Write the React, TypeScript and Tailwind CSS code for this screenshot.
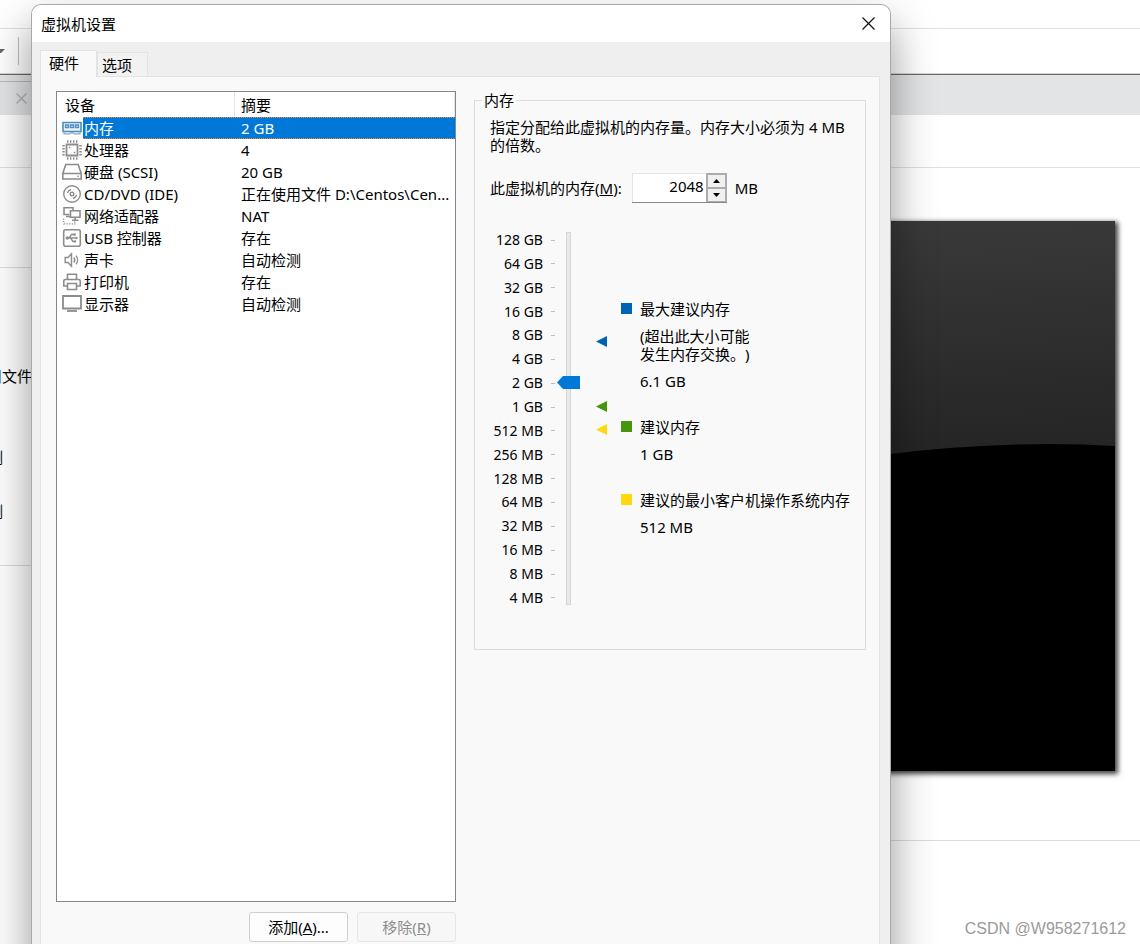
import { useState } from "react";
import type { ReactNode } from "react";

type Device = {
  name: string;
  summary: string;
  icon: ReactNode;
};

const iconProps = {
  width: 20,
  height: 20,
  viewBox: "0 0 20 20",
  fill: "none",
  stroke: "#8c8c8c",
  strokeWidth: 1.6,
};

const devices: Device[] = [
  {
    name: "内存",
    summary: "2 GB",
    icon: (
      <svg {...iconProps} stroke="#4a8dbd">
        <path d="M1 4.500h18v9H1z" fill="#eaf3fa" />
        <path d="M3.500 7h3v2.500h-3zM8.500 7h3v2.500h-3zM13.500 7h3v2.500h-3z" strokeWidth="1.3" />
        <path d="M2 13.500v2.300h6l2-1.500 2 1.500h6v-2.300" stroke="#8aa9bf" strokeWidth="1.2" />
      </svg>
    ),
  },
  {
    name: "处理器",
    summary: "4",
    icon: (
      <svg {...iconProps}>
        <path d="M4.500 4.500h11v11h-11z" strokeWidth="1.800" />
        <path d="M5 1.500h10.500M5 18.500h10.500" strokeWidth="2.400" strokeDasharray="1.400 1.600" />
        <path d="M1.500 5v10.500M18.500 5v10.500" strokeWidth="2.400" strokeDasharray="1.400 1.600" />
        <path d="M6.800 7.500h1.500M11.800 12.500h1.500" />
      </svg>
    ),
  },
  {
    name: "硬盘 (SCSI)",
    summary: "20 GB",
    icon: (
      <svg {...iconProps}>
        <path d="M3.800 2.500h12.400l3 9v5.500H.8v-5.500zM.8 11.500h18.400" />
        <path d="M15 14.200h2" strokeWidth="1" />
      </svg>
    ),
  },
  {
    name: "CD/DVD (IDE)",
    summary: "正在使用文件 D:\\Centos\\Cen...",
    icon: (
      <svg {...iconProps} strokeWidth="1.4">
        <circle cx="10" cy="10" r="8.300" />
        <circle cx="10" cy="10" r="1.800" />
        <path d="M5.500 9A5 5 0 0 1 9 5.500M14.500 11A5 5 0 0 1 11 14.500" />
      </svg>
    ),
  },
  {
    name: "网络适配器",
    summary: "NAT",
    icon: (
      <svg {...iconProps}>
        <path d="M7.500 8.500H2V1.800h9V4M4 10.500h4" />
        <path d="M8.500 4.800h9.500v6.400H8.500zM13.200 11v3M10 14.300h6.500" />
        <path d="M1.700 12.500v6M2 17.800h11.500M12.700 15.500v3" strokeWidth="1.200" strokeDasharray="1.200 1.400" />
      </svg>
    ),
  },
  {
    name: "USB 控制器",
    summary: "存在",
    icon: (
      <svg {...iconProps} strokeWidth="1.3">
        <rect x="1.700" y="1.700" width="16.600" height="16.600" rx="2" strokeWidth="1.600" />
        <path d="M5 10h10M7 10l2.500-3.500H12M8.500 10l2.500 3.500h2" />
        <circle cx="5.300" cy="10" r="1.100" fill="#8c8c8c" />
        <path d="M11.500 5.500h2v2h-2zM12.300 12.500h1.700v1.700h-1.700zM14 8.800l2 1.200-2 1.200z" fill="#8c8c8c" strokeWidth=".3" />
      </svg>
    ),
  },
  {
    name: "声卡",
    summary: "自动检测",
    icon: (
      <svg {...iconProps} strokeWidth="1.4">
        <path d="M3.200 7.500H6l3.500-3.700v12.400L6 12.500H3.200z" />
        <path d="M11.800 7.500a4 4 0 0 1 0 5M14 5.800a6.500 6.500 0 0 1 0 8.400" />
      </svg>
    ),
  },
  {
    name: "打印机",
    summary: "存在",
    icon: (
      <svg {...iconProps}>
        <path d="M5.500 7.500V2.200h9v5.300" />
        <path d="M5 14H1.800V9q0-1.500 1.500-1.500h13.400q1.500 0 1.500 1.500v5H15" />
        <path d="M5.500 11.500h9v6h-9z" />
      </svg>
    ),
  },
  {
    name: "显示器",
    summary: "自动检测",
    icon: (
      <svg {...iconProps}>
        <path d="M1 2h18v12.500H1z" strokeWidth="1.800" />
        <path d="M5 17h10" strokeWidth="1.800" />
      </svg>
    ),
  },
];

const sizes = [
  "128 GB",
  "64 GB",
  "32 GB",
  "16 GB",
  "8 GB",
  "4 GB",
  "2 GB",
  "1 GB",
  "512 MB",
  "256 MB",
  "128 MB",
  "64 MB",
  "32 MB",
  "16 MB",
  "8 MB",
  "4 MB",
];

// blue row with a dotted focus line along its top and bottom
const selectedCell =
  "text-white [background:repeating-linear-gradient(90deg,#ff8728_0_1px,#0078d7_1px_2px)_top/100%_1px_no-repeat,repeating-linear-gradient(90deg,#ff8728_0_1px,#0078d7_1px_2px)_bottom/100%_1px_no-repeat,#0078d7]";

function Backdrop() {
  return (
    <div className="flex h-full flex-col bg-white">
      <div className="h-[29px] shrink-0 border-b border-[#e0e0e0]" />
      <div className="flex h-[45px] shrink-0 items-center border-b border-[#d5d5d5]">
        <svg width="6" height="4" className="shrink-0">
          <path d="M0 0h5L1 4H0z" fill="#666" />
        </svg>
        <div className="ml-3 h-7 w-px bg-[#c0c0c0]" />
      </div>
      <div className="h-[41px] shrink-0 border-t border-[#6a6a6a] bg-[#e3e4e6]">
        <div className="mt-[6px] flex h-[34px] w-[200px] items-center border-t border-[#b9babc] pl-4">
          <svg width="11" height="11" stroke="#b4b5b7" strokeWidth="1.5">
            <path d="M.5.5l10 10M10.500.5l-10 10" />
          </svg>
        </div>
      </div>
      <div className="h-[53px] shrink-0 border-b border-[#e0e0e0]" />
      <div className="flex flex-1">
        <aside className="w-8 shrink-0">
          <div className="h-[100px] border-b border-[#dcdcdc]" />
          <div className="h-[298px] border-b border-[#dcdcdc] pt-[99px]">
            <p className="flex justify-end whitespace-nowrap">用文件</p>
            <p className="mt-[63px] flex w-[3px] justify-end whitespace-nowrap">测</p>
            <p className="mt-9 flex w-[3px] justify-end whitespace-nowrap">测</p>
          </div>
        </aside>
        <main className="flex flex-1 flex-col pt-[53px]">
          <svg
            width="733"
            height="550"
            viewBox="0 0 733 550"
            className="mr-[25px] shrink-0 self-end shadow-[2px_2px_5px_1px_rgba(0,0,0,0.75)]"
          >
            <defs>
              <linearGradient id="sheen" x1="0" y1="0" x2="0.1" y2="1">
                <stop offset="0" stopColor="#3b3b3b" />
                <stop offset="1" stopColor="#1f1f1f" />
              </linearGradient>
            </defs>
            <path d="M0 0h733v550H0z" fill="#000" />
            <path d="M0 0h733v225Q700 223 668 223Q588 223 508 233Q250 256 0 320z" fill="url(#sheen)" />
          </svg>
          <div className="mt-[69px] border-t border-[#dcdcdc]" />
          <p className="mt-auto mr-[14px] mb-[3px] text-right font-['Liberation_Sans'] text-base text-[#9a9a9a]">
            CSDN @W958271612
          </p>
        </main>
      </div>
    </div>
  );
}

function DeviceList() {
  const [selected, setSelected] = useState(0);

  return (
    <div className="flex-1 overflow-hidden border border-[#828790] bg-white">
      <table className="w-full table-fixed border-separate border-spacing-0 whitespace-nowrap">
        <colgroup>
          <col className="w-[26px]" />
          <col className="w-[152px]" />
          <col />
        </colgroup>
        <thead>
          <tr className="h-[25px] text-left">
            <th colSpan={2} className="border-r border-[#e5e5e5] p-0 pl-2 font-normal">
              设备
            </th>
            <th className="border-r border-[#e5e5e5] p-0 pl-[6px] font-normal">摘要</th>
          </tr>
        </thead>
        <tbody>
          {devices.map((device, i) => (
            <tr key={device.name} className="h-[22px]" onClick={() => setSelected(i)}>
              <td className="p-0 pl-[5px]">{device.icon}</td>
              <td className={`p-0 pl-px ${i === selected ? selectedCell : ""}`}>
                {device.name}
              </td>
              <td className={`p-0 pl-[6px] ${i === selected ? selectedCell : ""}`}>
                {device.summary}
              </td>
            </tr>
          ))}
        </tbody>
      </table>
    </div>
  );
}

function LegendItem({
  swatch,
  title,
  note,
  value,
}: {
  swatch: string;
  title: string;
  note?: ReactNode;
  value: string;
}) {
  return (
    <div className="grid grid-cols-[11px_1fr] gap-x-2 gap-y-[9px] whitespace-nowrap">
      <span className={`mt-[3px] size-[11px] ${swatch}`} />
      <p>{title}</p>
      {note && <p className="col-start-2">{note}</p>}
      <p className="col-start-2">{value}</p>
    </div>
  );
}

function MemoryPanel() {
  const [memory, setMemory] = useState("2048");
  const level = Math.log2(Number(memory) || 4) - 2;

  return (
    <fieldset className="min-w-0 flex-1 self-start border border-[#dcdcdc] px-[15px] pb-[41px]">
      <legend className="-ml-2 px-[2px]">内存</legend>
      <p className="pt-[9px]">
        指定分配给此虚拟机的内存量。内存大小必须为 4 MB 的倍数。
      </p>

      <div className="mt-[19px] flex items-center whitespace-nowrap">
        <label htmlFor="memory">
          此虚拟机的内存(<u>M</u>):
        </label>
        <div className="ml-[10px] flex h-[30px] border-b border-[#868686] bg-white">
          <input
            id="memory"
            value={memory}
            onChange={(e) => setMemory(e.target.value)}
            className="w-[74px] border-t border-l border-[#e5e5e5] pr-[2px] pb-1 text-right outline-none"
          />
          <div className="flex w-[21px] flex-col border border-b-0 border-[#acacac] bg-[#f0f0f0]">
            <button
              aria-label="增加"
              onClick={() => setMemory(String(Number(memory) * 2))}
              className="flex flex-1 items-center justify-center border border-[#acacac]"
            >
              <svg width="7" height="4">
                <path d="M3.500 0L7 4H0z" />
              </svg>
            </button>
            <button
              aria-label="减少"
              onClick={() => setMemory(String(Number(memory) / 2))}
              className="flex flex-1 items-center justify-center border border-[#acacac]"
            >
              <svg width="7" height="4">
                <path d="M0 0h7L3.500 4z" />
              </svg>
            </button>
          </div>
        </div>
        <span className="ml-2">MB</span>
      </div>

      <div className="mt-[27px] flex">
        <ul className="flex h-[378px] w-[65px] flex-col justify-between text-sm leading-5">
          {sizes.map((size) => (
            <li key={size} className="flex items-center justify-end gap-2 whitespace-nowrap">
              {size}
              <span className="h-px w-1 bg-[#bdbdbd]" />
            </li>
          ))}
        </ul>

        <div className="mt-[2px] ml-[2px] grid h-[373px] w-[23px] justify-items-center">
          <div className="w-[5px] border border-[#d6d6d6] bg-[#e7eaea] [grid-area:1/1]" />
          <input
            type="range"
            aria-label="内存"
            min={0}
            max={15}
            step={1}
            value={level}
            onChange={(e) => setMemory(String(2 ** (Number(e.target.value) + 2)))}
            className="h-[373px] w-[23px] appearance-none bg-transparent [direction:rtl] [grid-area:1/1] [writing-mode:vertical-lr] [&::-webkit-slider-thumb]:h-[13px] [&::-webkit-slider-thumb]:w-[23px] [&::-webkit-slider-thumb]:appearance-none [&::-webkit-slider-thumb]:bg-[#0078d7] [&::-webkit-slider-thumb]:[clip-path:polygon(0_50%,6px_0,100%_0,100%_100%,6px_100%)]"
          />
        </div>

        <svg width="12" height="378" className="ml-4 shrink-0">
          <path d="M0 111.500l11-5.500v11z" fill="#0063b1" />
          <path d="M0 176.500l11-5.500v11z" fill="#44960c" />
          <path d="M0 199.500l11-5.500v11z" fill="#ffd90f" />
        </svg>

        <div className="mt-[70px] ml-[13px] flex flex-col gap-7">
          <LegendItem
            swatch="bg-[#0063b1]"
            title="最大建议内存"
            note={
              <>
                (超出此大小可能
                <br />
                发生内存交换。)
              </>
            }
            value="6.1 GB"
          />
          <LegendItem swatch="bg-[#44960c]" title="建议内存" value="1 GB" />
          <LegendItem
            swatch="bg-[#ffd90f]"
            title="建议的最小客户机操作系统内存"
            value="512 MB"
          />
        </div>
      </div>
    </fieldset>
  );
}

function SettingsDialog() {
  return (
    <section
      role="dialog"
      aria-labelledby="title"
      className="absolute top-[5px] right-[250px] -bottom-6 left-8 flex flex-col overflow-hidden rounded-t-[9px] bg-[#efefef] shadow-[0_0_0_1px_#a9a9a9,0_22px_44px_2px_rgba(0,0,0,0.4)]"
    >
      <header className="flex h-[37px] shrink-0 items-center justify-between bg-white pr-[15px] pl-[9px]">
        <h1 id="title">虚拟机设置</h1>
        <button aria-label="关闭">
          <svg width="13" height="13" stroke="#111" strokeWidth="1.2">
            <path d="M.5.5l12 12M12.500.5l-12 12" />
          </svg>
        </button>
      </header>

      <div className="flex flex-1 flex-col pt-2 pr-[10px] pl-2">
        <nav role="tablist" className="flex items-end">
          <button
            role="tab"
            aria-selected="true"
            className="relative -mb-px flex h-[27px] w-[57px] justify-start border border-b-0 border-[#e3e3e3] bg-[#f9f9f9] pt-[3px] pl-2"
          >
            硬件
          </button>
          <button
            role="tab"
            aria-selected="false"
            className="flex h-6 w-[51px] items-center justify-start border border-b-0 border-[#e3e3e3] bg-[#f2f2f2] pl-1"
          >
            选项
          </button>
        </nav>

        <div className="flex flex-1 gap-[18px] border border-b-0 border-[#e3e3e3] bg-[#f9f9f9] pt-[14px] pr-[13px] pb-[26px] pl-[15px]">
          <div className="flex w-[400px] shrink-0 flex-col">
            <DeviceList />
            <div className="mt-[10px] flex justify-end gap-[9px]">
              <button className="h-[30px] w-[99px] rounded-[3px] border border-[#cfcfcf] bg-[#fdfdfd]">
                添加(<u>A</u>)...
              </button>
              <button
                disabled
                className="h-[30px] w-[99px] rounded-[3px] border border-[#e6e6e6] bg-[#f7f7f7] text-[#8d8d8d]"
              >
                移除(<u>R</u>)
              </button>
            </div>
          </div>
          <MemoryPanel />
        </div>
      </div>
    </section>
  );
}

export default function App() {
  return (
    <div className="relative h-screen min-h-[720px] overflow-hidden font-['Noto_Sans','Noto_Sans_CJK_SC',sans-serif] text-[15px] leading-[18px] text-black [text-spacing-trim:space-all]">
      <Backdrop />
      <SettingsDialog />
    </div>
  );
}
